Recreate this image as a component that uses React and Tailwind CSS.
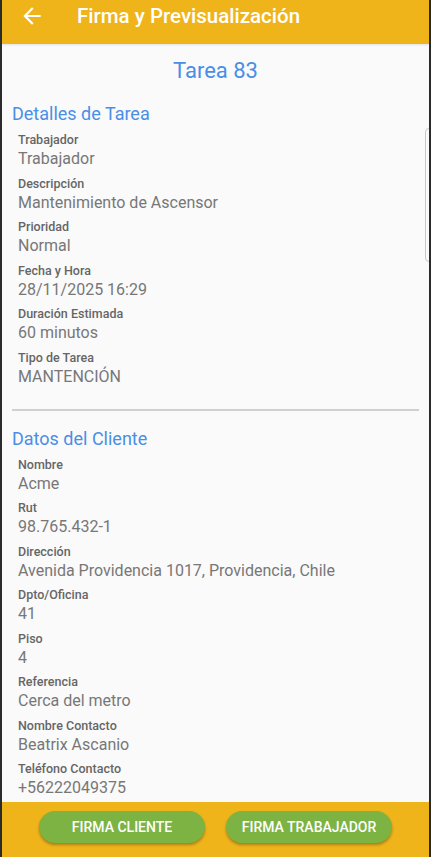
const task = [
  ["Trabajador", "Trabajador"],
  ["Descripción", "Mantenimiento de Ascensor"],
  ["Prioridad", "Normal"],
  ["Fecha y Hora", "28/11/2025 16:29"],
  ["Duración Estimada", "60 minutos"],
  ["Tipo de Tarea", "MANTENCIÓN"],
];

const client = [
  ["Nombre", "Acme"],
  ["Rut", "98.765.432-1"],
  ["Dirección", "Avenida Providencia 1017, Providencia, Chile"],
  ["Dpto/Oficina", "41"],
  ["Piso", "4"],
  ["Referencia", "Cerca del metro"],
  ["Nombre Contacto", "Beatrix Ascanio"],
  ["Teléfono Contacto", "+56222049375"],
];

const Field = ({ label, value }) => (
  <div className="pl-[6px] mb-[6.5px]">
    <div className="text-[12.5px] leading-[16px] font-medium text-[#666666]">{label}</div>
    <div className="pt-[1px] text-[16px] leading-[20px] text-[#777777]">{value}</div>
  </div>
);

const App = () => {
  return (
    <div className="relative h-screen flex flex-col bg-[#fafafa] border-l-2 border-r-2 border-[#2b2b2b] font-['Roboto',sans-serif] overflow-hidden">
      <header className="h-[44px] shrink-0 bg-[#f0b41b] flex items-start pt-[3px] shadow-[0_1px_2px_rgba(0,0,0,0.1)]">
        <svg width="26" height="26" viewBox="0 0 24 24" className="ml-[17px]" fill="#ffffff">
          <path d="M20 11H7.83l5.59-5.59L12 4l-8 8 8 8 1.41-1.41L7.83 13H20v-2z" />
        </svg>
        <h1 className="ml-[32px] text-[20.5px] leading-[26px] font-medium text-white">
          Firma y Previsualización
        </h1>
      </header>

      <main className="flex-1 overflow-hidden px-[10px]">
        <h2 className="pt-[13px] text-center text-[22px] leading-[28px] text-[#4a8ee6]">Tarea 83</h2>

        <h3 className="mt-[17px] mb-[6px] text-[18px] leading-[24px] text-[#4a8ee6]">Detalles de Tarea</h3>
        {task.map(([l, v]) => (
          <Field key={l} label={l} value={v} />
        ))}

        <div className="mt-[22px] h-[2px] bg-[#d0d0d0]" />

        <h3 className="mt-[16px] mb-[6px] text-[18px] leading-[24px] text-[#4a8ee6]">Datos del Cliente</h3>
        {client.map(([l, v]) => (
          <Field key={l} label={l} value={v} />
        ))}
      </main>

      <footer className="h-[55px] shrink-0 bg-[#f0b41b] flex justify-center gap-[21px] pt-[9px]">
        <button className="w-[166px] h-[32px] rounded-full bg-[#7cb342] text-white text-[14px] font-medium shadow-[0_2px_3px_rgba(0,0,0,0.3)]">
          FIRMA CLIENTE
        </button>
        <button className="w-[166px] h-[32px] rounded-full bg-[#7cb342] text-white text-[14px] font-medium shadow-[0_2px_3px_rgba(0,0,0,0.3)]">
          FIRMA TRABAJADOR
        </button>
      </footer>

      <div className="absolute right-[-8px] top-[128px] w-[12px] h-[134px] rounded-[4px] border border-[#c8c8c8]" />
    </div>
  );
};

export default App;
